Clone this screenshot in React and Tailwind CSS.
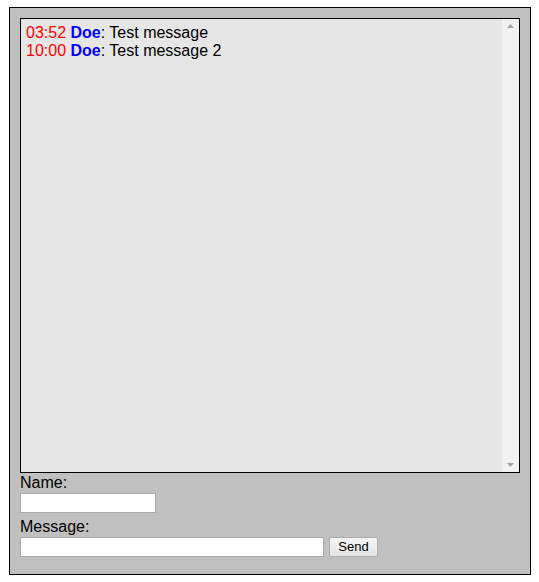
export default function App() {
  const msgs = [
    { t: "03:52", n: "Doe", m: "Test message" },
    { t: "10:00", n: "Doe", m: "Test message 2" },
  ];
  return (
    <div className="w-[539px] h-[582px] bg-white pt-[7px] pl-[9px]" style={{ fontFamily: '"Liberation Sans", Arial, sans-serif' }}>
      <div className="w-[522px] h-[568px] border border-black bg-[#c0c0c0] p-[10px]">
        <div className="w-[500px] h-[455px] border border-black bg-[#e6e6e6] flex">
          <div className="flex-1 pl-[5px] pt-[5px] text-[16px] leading-[18px] text-black">
            {msgs.map((x, i) => (
              <div key={i}>
                <span className="text-[#ff0000]">{x.t}</span>{" "}
                <span className="text-[#0000ff] font-bold">{x.n}</span>: {x.m}
              </div>
            ))}
          </div>
          <div className="w-[17px] h-full bg-[#f1f1f1] flex flex-col justify-between items-center py-[5px]">
            <svg width="7" height="4" viewBox="0 0 7 4"><polygon points="3.5,0 7,4 0,4" fill="#a3a3a3" /></svg>
            <svg width="7" height="4" viewBox="0 0 7 4"><polygon points="0,0 7,0 3.5,4" fill="#a3a3a3" /></svg>
          </div>
        </div>
        <div className="text-[16px] leading-[18px] text-black mt-[1px]">Name:</div>
        <input className="block mt-[1px] w-[136px] h-[20px] bg-white border border-[#a9a9a9] outline-none" />
        <div className="text-[16px] leading-[18px] text-black mt-[5px]">Message:</div>
        <div className="flex items-center mt-[1px]">
          <input className="block w-[304px] h-[20px] bg-white border border-[#a9a9a9] outline-none" />
          <button className="ml-[5px] w-[49px] h-[20px] border border-[#adadad] rounded-[2px] bg-gradient-to-b from-[#f6f6f6] to-[#e3e3e3] text-[13px] leading-[16px] text-black">
            Send
          </button>
        </div>
      </div>
    </div>
  );
}
